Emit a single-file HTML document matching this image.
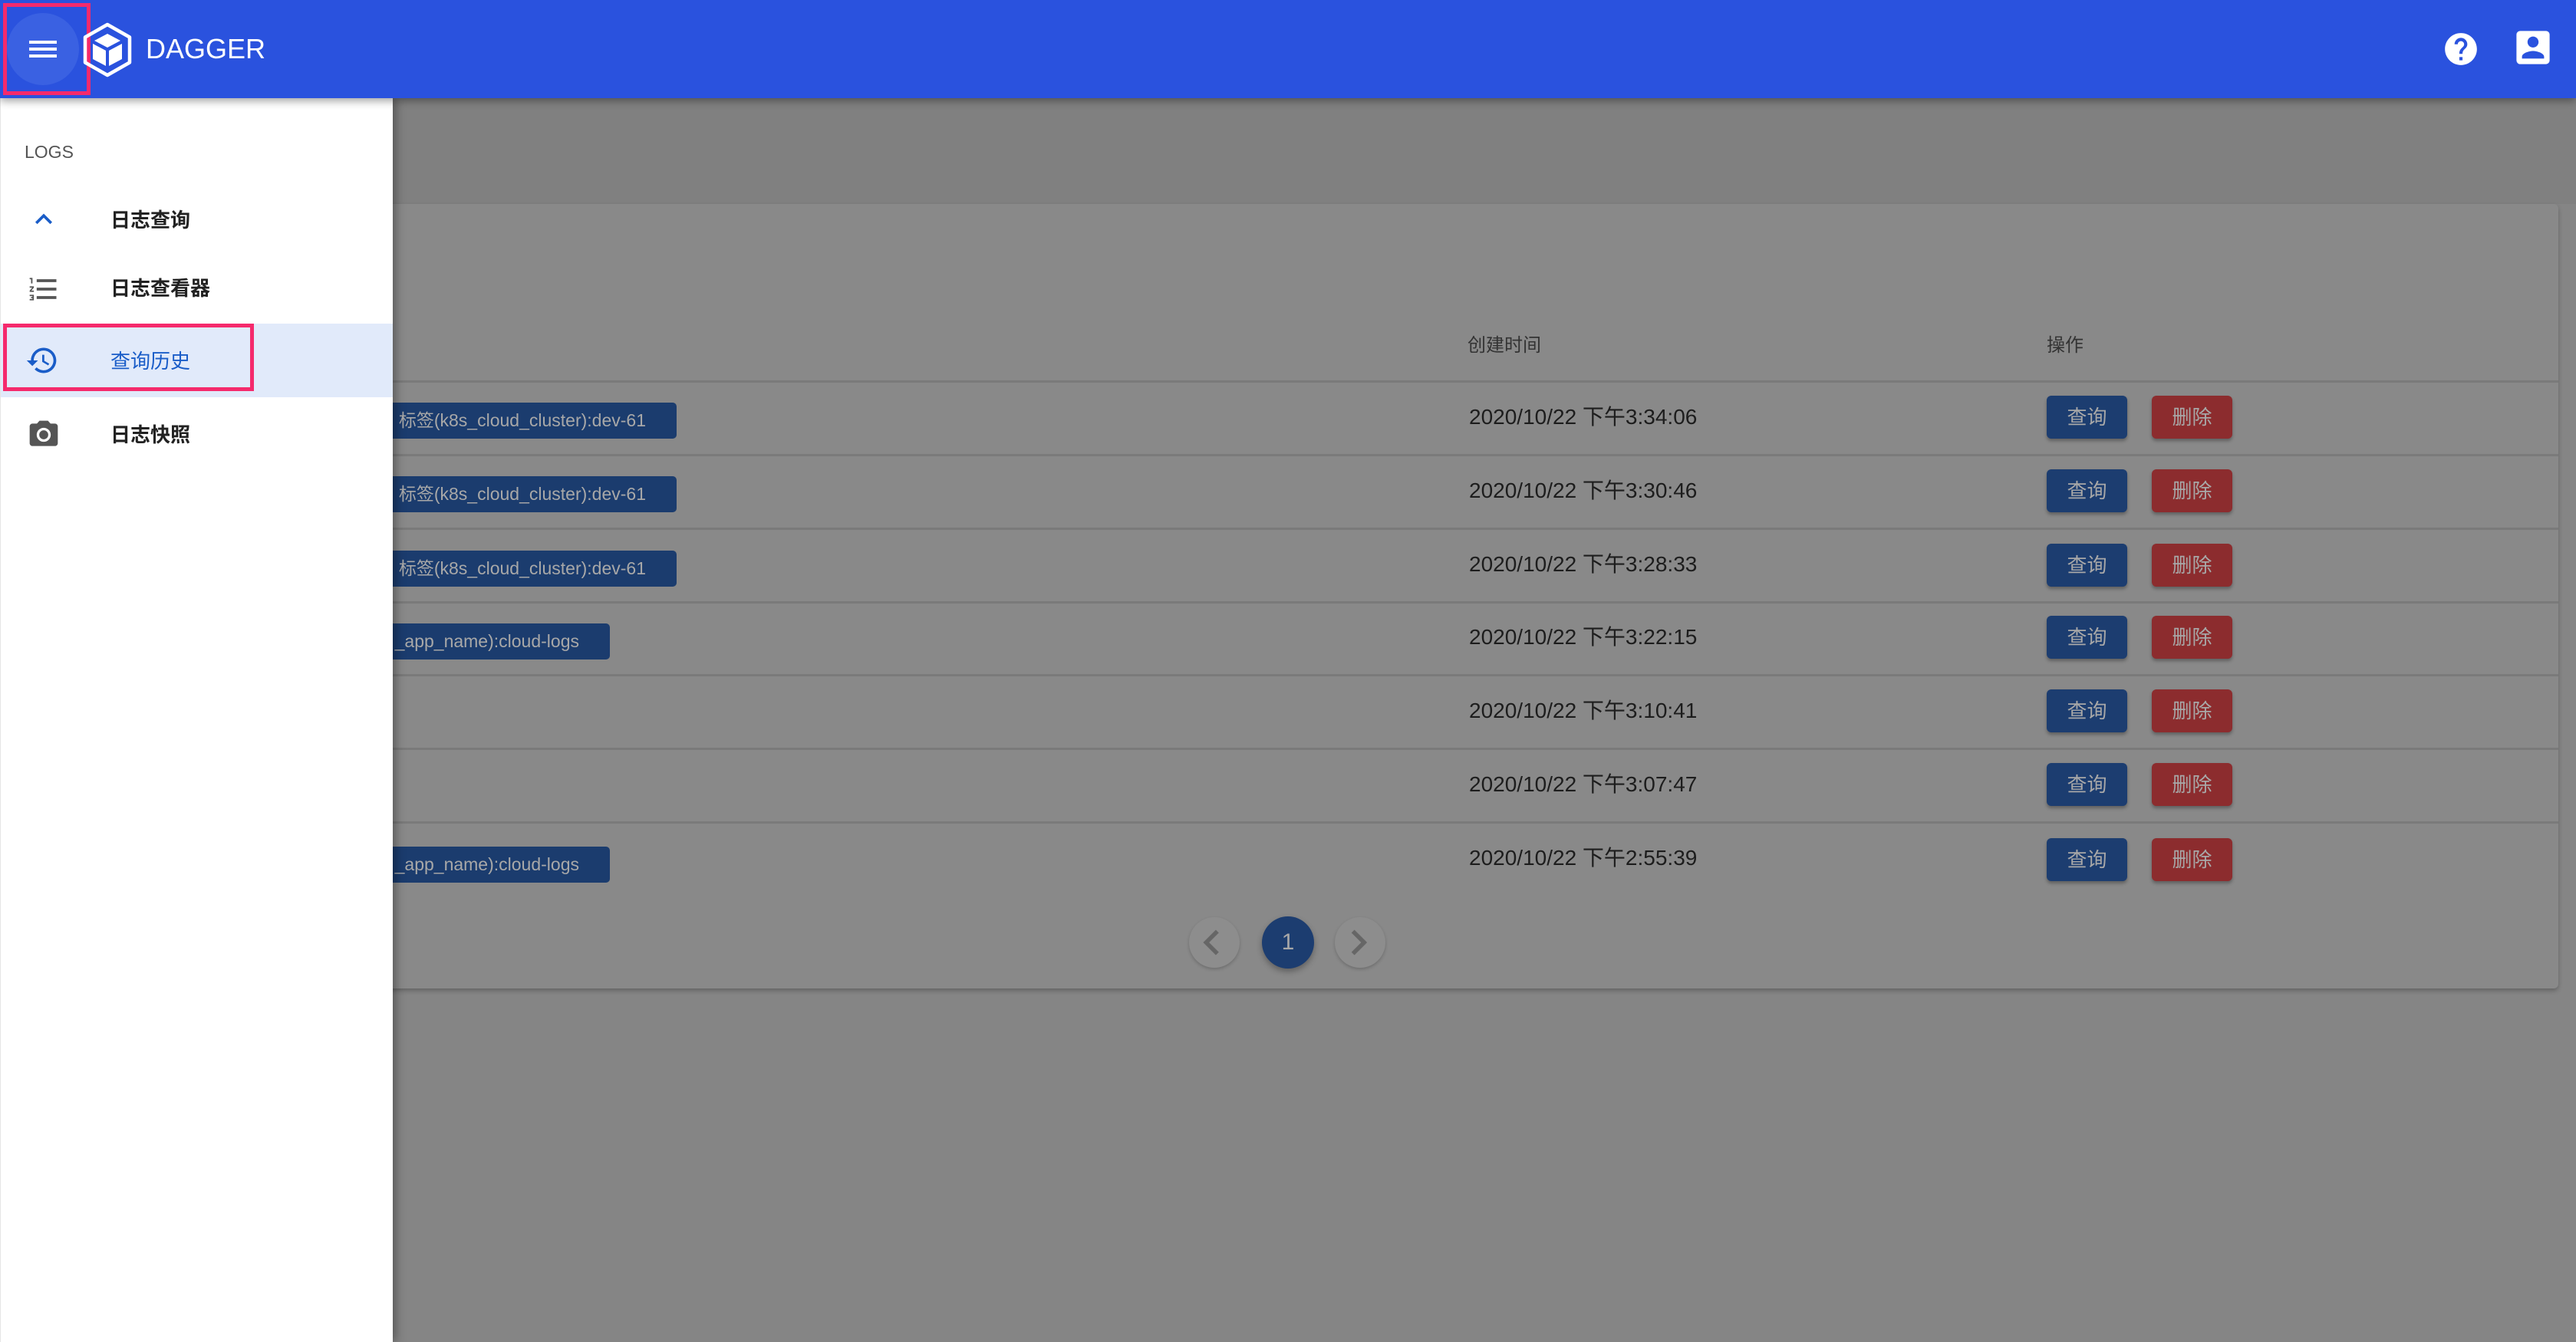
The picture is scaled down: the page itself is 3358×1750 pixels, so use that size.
<!DOCTYPE html>
<html><head><meta charset="utf-8">
<style>
*{margin:0;padding:0;box-sizing:border-box}
html,body{width:3358px;height:1750px;overflow:hidden;background:#858585;font-family:"Liberation Sans","Noto Sans CJK SC",sans-serif}
.abs{position:absolute}
#hdr{left:0;top:0;width:3358px;height:128px;background:#2a52de;box-shadow:0 4px 10px rgba(0,0,0,.35);z-index:5}
#bgtop{left:512px;top:128px;width:2846px;height:138px;background:#808080}
#card{left:470px;top:266px;width:2865px;height:1023px;background:#898989;border-radius:6px;box-shadow:0 3px 6px rgba(0,0,0,.25)}
.line{position:absolute;left:470px;width:2865px;height:3px;background:#7a7a7a}
.th{position:absolute;font-size:24px;color:#333;top:430px}
.date{position:absolute;left:1915px;font-size:28px;color:#1d1d1d;line-height:40px}
.chip{position:absolute;right:2476px;height:47px;background:#1b3c6e;border-radius:5px;color:#a8a8a8;font-size:23px;line-height:47px;padding:0 40px 0 300px;white-space:nowrap}
.btn{position:absolute;width:105px;height:56px;border-radius:6px;color:#a8a8a8;font-size:26px;line-height:56px;text-align:center;box-shadow:0 3px 4px rgba(0,0,0,.3)}
.q{left:2668px;background:#1c3d70}
.d{left:2805px;background:#8c2c2e}
#drawer{left:0;top:128px;width:512px;height:1622px;background:#fff;z-index:4;box-shadow:4px 0 12px rgba(0,0,0,.35);border-left:1px solid #e5e5e5}
.item{position:absolute;left:143px;font-size:26px;font-weight:bold;color:#222;line-height:40px}
.ic{position:absolute;left:34px;width:44px;height:44px}
.pg{position:absolute;width:66px;height:66px;border-radius:50%;top:1196px;background:#8d8d8d;box-shadow:0 2px 4px rgba(0,0,0,.2)}
</style></head><body>
<div id="bgtop" class="abs"></div>
<div id="card" class="abs"></div>
<div class="th" style="left:1913px">创建时间</div>
<div class="th" style="left:2668px">操作</div>
<div class="line" style="top:496px"></div>
<div class="line" style="top:592px"></div>
<div class="line" style="top:688px"></div>
<div class="line" style="top:784px"></div>
<div class="line" style="top:879px"></div>
<div class="line" style="top:975px"></div>
<div class="line" style="top:1071px"></div>

<div class="chip" style="top:525px">标签(k8s_cloud_cluster):dev-61</div>
<div class="chip" style="top:621px">标签(k8s_cloud_cluster):dev-61</div>
<div class="chip" style="top:718px">标签(k8s_cloud_cluster):dev-61</div>
<div class="chip" style="top:813px;right:2563px">_app_name):cloud-logs</div>
<div class="chip" style="top:1104px;right:2563px">_app_name):cloud-logs</div>

<div class="date" style="top:524px">2020/10/22 下午3:34:06</div>
<div class="date" style="top:620px">2020/10/22 下午3:30:46</div>
<div class="date" style="top:716px">2020/10/22 下午3:28:33</div>
<div class="date" style="top:811px">2020/10/22 下午3:22:15</div>
<div class="date" style="top:907px">2020/10/22 下午3:10:41</div>
<div class="date" style="top:1003px">2020/10/22 下午3:07:47</div>
<div class="date" style="top:1099px">2020/10/22 下午2:55:39</div>

<div class="btn q" style="top:516px">查询</div><div class="btn d" style="top:516px">删除</div>
<div class="btn q" style="top:612px">查询</div><div class="btn d" style="top:612px">删除</div>
<div class="btn q" style="top:709px">查询</div><div class="btn d" style="top:709px">删除</div>
<div class="btn q" style="top:803px">查询</div><div class="btn d" style="top:803px">删除</div>
<div class="btn q" style="top:899px">查询</div><div class="btn d" style="top:899px">删除</div>
<div class="btn q" style="top:995px">查询</div><div class="btn d" style="top:995px">删除</div>
<div class="btn q" style="top:1093px">查询</div><div class="btn d" style="top:1093px">删除</div>

<div class="pg" style="left:1550px"><svg width="66" height="66" viewBox="0 0 24 24"><path d="M14.6 7.4 10 12l4.6 4.6-1.4 1.4-6-6 6-6z" transform="translate(-0.5 0)" fill="#666"/></svg></div>
<div class="pg" style="left:1645px;width:68px;height:68px;top:1195px;background:#1c3d70;box-shadow:0 4px 8px rgba(0,0,0,.3);color:#a8a8a8;font-size:30px;text-align:center;line-height:68px">1</div>
<div class="pg" style="left:1740px"><svg width="66" height="66" viewBox="0 0 24 24"><path d="M9.4 7.4 14 12l-4.6 4.6 1.4 1.4 6-6-6-6z" transform="translate(-1.5 0)" fill="#666"/></svg></div>

<div id="hdr" class="abs">
  <div class="abs" style="left:9px;top:17px;width:94px;height:94px;border-radius:50%;background:#3a61e2"></div>
  <div class="abs" style="left:38px;top:53px;width:36px;height:4px;background:#fff"></div>
  <div class="abs" style="left:38px;top:62px;width:36px;height:4px;background:#fff"></div>
  <div class="abs" style="left:38px;top:71px;width:36px;height:4px;background:#fff"></div>
  <div class="abs" style="left:4px;top:4px;width:114px;height:120px;border:5px solid #f52a6c"></div>
  <svg class="abs" style="left:106px;top:29px" width="68" height="72" viewBox="0 0 68 72">
    <polygon points="34,3 63,19.5 63,52.5 34,69 5,52.5 5,19.5" fill="none" stroke="#fff" stroke-width="4.5" stroke-linejoin="round"/>
    <polygon points="34,15 51,24 34,33 17,24" fill="#fff"/>
    <polygon points="15,28 32,37 32,57 15,48" fill="#fff"/>
    <polygon points="53,28 36,37 36,57 53,48" fill="#fff"/>
  </svg>
  <div class="abs" style="left:190px;top:40px;font-size:36px;color:#fff;line-height:48px">DAGGER</div>
  <svg class="abs" style="left:3183px;top:39px" width="50" height="50" viewBox="0 0 24 24"><path fill="#fff" d="M12 2C6.48 2 2 6.48 2 12s4.48 10 10 10 10-4.48 10-10S17.52 2 12 2zm1 17h-2v-2h2v2zm2.07-7.75l-.9.92C13.45 12.9 13 13.5 13 15h-2v-.5c0-1.1.45-2.1 1.17-2.830l1.24-1.26c.37-.36.59-.86.59-1.41 0-1.1-.9-2-2-2s-2 .9-2 2H8c0-2.21 1.79-4 4-4s4 1.79 4 4c0 .88-.36 1.68-.93 2.25z"/></svg>
  <svg class="abs" style="left:3278px;top:38px" width="48" height="48" viewBox="2 2 20 20"><path fill="#fff" d="M3 5v14a2 2 0 0 0 2 2h14c1.1 0 2-.9 2-2V5c0-1.1-.9-2-2-2H5a2 2 0 0 0-2 2zm12 4c0 1.66-1.34 3-3 3s-3-1.34-3-3 1.34-3 3-3 3 1.340 3 3zm-9 8c0-2 4-3.1 6-3.1s6 1.1 6 3.1v1H6v-1z"/></svg>
</div>

<div id="drawer" class="abs">
  <div class="abs" style="left:31px;top:57px;font-size:23px;color:#555">LOGS</div>
  <svg class="ic" style="top:136px" viewBox="0 0 24 24"><path fill="#1a5dc8" d="M7.41 15.41L12 10.83l4.59 4.58L18 14l-6-6-6 6z"/></svg>
  <div class="item" style="top:139px">日志查询</div>
  <svg class="ic" style="top:227px" viewBox="0 0 24 24"><path fill="#555" d="M2 17h2v.5H3v1h1v.5H2v1h3v-4H2v1zm1-9h1V4H2v1h1v3zm-1 3h1.8L2 13.1v.9h3v-1H3.2L5 10.9V10H2v1zm5-6v2h14V5H7zm0 14h14v-2H7v2zm0-6h14v-2H7v2z"/></svg>
  <div class="item" style="top:228px">日志查看器</div>
  <div class="abs" style="left:0;top:294px;width:511px;height:96px;background:#e1eafa"></div>
  <svg class="ic" style="top:320px;left:32px" viewBox="0 0 24 24"><path fill="#1a5dc8" d="M13 3c-4.97 0-9 4.03-9 9H1l3.89 3.89.07.14L9 12H6c0-3.87 3.13-7 7-7s7 3.13 7 7-3.13 7-7 7c-1.93 0-3.68-.79-4.94-2.06l-1.42 1.420C8.27 19.99 10.51 21 13 21c4.97 0 9-4.03 9-9s-4.03-9-9-9zm-1 5v5l4.28 2.54.72-1.21-3.5-2.08V8H12z"/></svg>
  <div class="item" style="top:323px;color:#1a5dc8;font-weight:normal">查询历史</div>
  <div class="abs" style="left:3px;top:294px;width:327px;height:88px;border:5px solid #f52a6c"></div>
  <svg class="ic" style="top:417px" viewBox="0 0 24 24"><path fill="#555" d="M12 15.2a3.2 3.2 0 1 0 0-6.4 3.2 3.2 0 0 0 0 6.4zM9 2L7.17 4H4c-1.1 0-2 .9-2 2v12c0 1.1.9 2 2 2h16c1.1 0 2-.9 2-2V6c0-1.1-.9-2-2-2h-3.17L15 2H9zm3 15c-2.76 0-5-2.24-5-5s2.24-5 5-5 5 2.240 5 5-2.24 5-5 5z"/></svg>
  <div class="item" style="top:419px">日志快照</div>
</div>
</body></html>
